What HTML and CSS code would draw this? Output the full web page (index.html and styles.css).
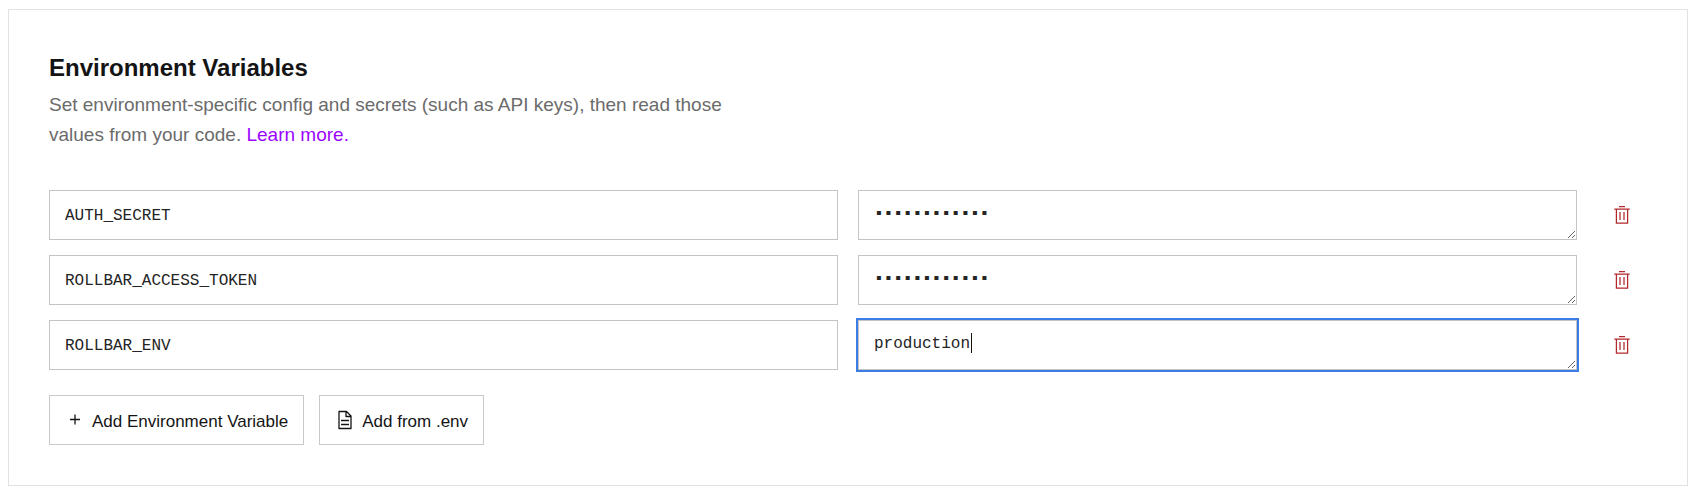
FILE: index.html
```html
<!DOCTYPE html>
<html lang="en">
<head>
<meta charset="utf-8">
<meta name="viewport" content="width=device-width, initial-scale=1">
<title>Environment Variables</title>
<link rel="stylesheet" href="styles.css">
</head>
<body>
<svg class="sprite" aria-hidden="true">
  <symbol id="trash" viewBox="0 0 16 18">
    <path d="M5 0.5H11M0.3 3H15.7M2.4 3V17H13.6V3M6 6V14M10 6V14" fill="none" stroke="currentColor" stroke-width="1.25"/>
  </symbol>
</svg>
<section class="card">
  <h2 class="title">Environment Variables</h2>
  <p class="intro">Set environment-specific config and secrets (such as API keys), then read those values from your code. <a class="link" href="#">Learn more.</a></p>
  <form class="vars">
    <div class="row">
      <input class="field" type="text" aria-label="Name of variable 1" value="AUTH_SECRET" spellcheck="false">
      <div class="value">
        <textarea class="field area" rows="1" aria-label="Value of AUTH_SECRET" spellcheck="false">▪▪▪▪▪▪▪▪▪▪▪▪</textarea>
      </div>
      <button class="remove" type="button" aria-label="Delete AUTH_SECRET"><svg class="trash"><use href="#trash"/></svg></button>
    </div>
    <div class="row">
      <input class="field" type="text" aria-label="Name of variable 2" value="ROLLBAR_ACCESS_TOKEN" spellcheck="false">
      <div class="value">
        <textarea class="field area" rows="1" aria-label="Value of ROLLBAR_ACCESS_TOKEN" spellcheck="false">▪▪▪▪▪▪▪▪▪▪▪▪</textarea>
      </div>
      <button class="remove" type="button" aria-label="Delete ROLLBAR_ACCESS_TOKEN"><svg class="trash"><use href="#trash"/></svg></button>
    </div>
    <div class="row">
      <input class="field" type="text" aria-label="Name of variable 3" value="ROLLBAR_ENV" spellcheck="false">
      <div class="value">
        <textarea class="field area active" rows="1" aria-label="Value of ROLLBAR_ENV" spellcheck="false">production</textarea>
        <span class="caret"></span>
      </div>
      <button class="remove" type="button" aria-label="Delete ROLLBAR_ENV"><svg class="trash"><use href="#trash"/></svg></button>
    </div>
    <div class="actions">
      <button class="btn" type="button">
        <svg class="icon" viewBox="0 0 20 20"><path d="M5 9.5H15M10 4.5V14.5" fill="none" stroke="currentColor" stroke-width="1.3"/></svg>
        <span class="label">Add Environment Variable</span>
      </button>
      <button class="btn" type="button">
        <svg class="icon" viewBox="0 0 20 20"><path d="M4 1.5H11.5L16 6V18.5H4ZM11 1.5V6.5H16M6 10.5H14M6 14.5H14" fill="none" stroke="currentColor" stroke-width="1.3" stroke-linejoin="round"/></svg>
        <span class="label">Add from .env</span>
      </button>
    </div>
  </form>
</section>
</body>
</html>
```
FILE: styles.css
```css
* {
  box-sizing: border-box;
}

body {
  margin: 9px 8px 0;
  background: #fff;
  color: #141414;
  font-family: "Liberation Sans", Arial, sans-serif;
}

.sprite {
  position: absolute;
  width: 0;
  height: 0;
}

.card {
  padding: 40px;
  border: 1px solid #e2e2e2;
}

.title {
  margin: 0 0 4px;
  font-size: 24px;
  line-height: 36px;
  font-weight: 700;
}

.intro {
  max-width: 700px;
  margin: 0 0 40px;
  color: #6b6b6b;
  font-size: 19px;
  line-height: 30px;
}

.link {
  color: #9a05ff;
  text-decoration: none;
}

.vars {
  display: grid;
  gap: 15px;
}

.row {
  display: grid;
  grid-template-columns: 1fr calc(50% - 80px) 50px;
  gap: 20px;
}

.field {
  display: block;
  width: 100%;
  height: 50px;
  margin: 0;
  padding: 14px 15px 12px;
  border: 1px solid #c4c4c4;
  border-radius: 0;
  background: #fff;
  color: #242424;
  font-family: "Liberation Mono", "DejaVu Sans Mono", monospace;
  font-size: 16px;
  line-height: 24px;
}

.area {
  min-height: 50px;
  overflow: hidden;
  resize: vertical;
  padding-top: 11px;
}

.active,
.field:focus {
  outline: 2px solid #3b7de3;
}

.value {
  position: relative;
  font-family: "Liberation Mono", "DejaVu Sans Mono", monospace;
  font-size: 16px;
}

.caret {
  position: absolute;
  top: 13px;
  left: calc(17px + 10ch);
  width: 1px;
  height: 20px;
  background: #141414;
}

.remove {
  display: grid;
  place-items: center;
  height: 50px;
  padding: 0;
  border: 0;
  background: none;
  color: #b3282d;
}

.trash {
  width: 16px;
  height: 18px;
}

.actions {
  display: flex;
  gap: 15px;
  margin-top: 10px;
}

.btn {
  display: flex;
  align-items: center;
  gap: 7px;
  height: 50px;
  padding: 0 15px;
  border: 1px solid #c8c8c8;
  border-radius: 0;
  background: #fff;
  color: #141414;
  font-family: inherit;
  font-size: 17px;
  line-height: 24px;
}

.icon {
  width: 20px;
  height: 20px;
}

.label {
  padding-top: 3px;
}
```
